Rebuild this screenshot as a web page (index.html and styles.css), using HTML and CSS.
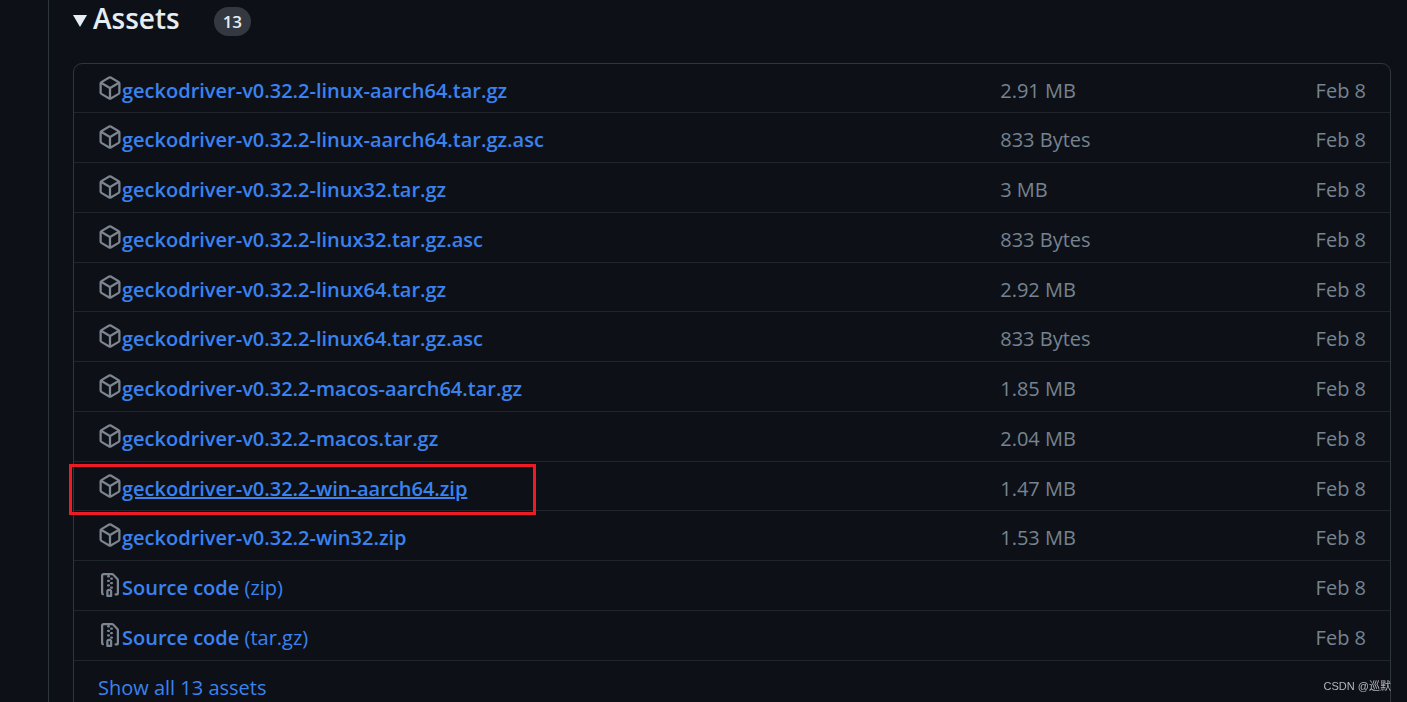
FILE: index.html
```html
<!DOCTYPE html>
<html lang="en">
<head>
  <meta charset="UTF-8">
  <meta name="viewport" content="width=device-width, initial-scale=1.0">
  <title>Release assets</title>
  <link rel="stylesheet" href="styles.css">
</head>
<body>
  <svg class="sprite" aria-hidden="true">
    <symbol id="package" viewBox="0 0 16 16">
      <path d="m8.878.392 5.25 3.045c.54.314.872.89.872 1.514v6.098a1.75 1.75 0 0 1-.872 1.514l-5.25 3.045a1.75 1.75 0 0 1-1.756 0l-5.25-3.045A1.75 1.75 0 0 1 1 11.049V4.951c0-.624.332-1.201.872-1.514L7.122.392a1.75 1.75 0 0 1 1.756 0ZM7.875 1.69l-4.63 2.685L8 7.133l4.755-2.758-4.63-2.685a.248.248 0 0 0-.25 0ZM2.5 5.677v5.372c0 .09.047.171.125.216l4.625 2.683V8.432Zm6.25 8.271 4.625-2.683a.25.25 0 0 0 .125-.216V5.677L8.75 8.432Z"/>
    </symbol>
    <symbol id="file-zip" viewBox="0 0 16 16">
      <path d="M3.5 1.75v11.5c0 .09.048.173.126.217a.75.75 0 0 1-.752 1.298A1.748 1.748 0 0 1 2 13.25V1.75C2 .784 2.784 0 3.75 0h5.586c.464 0 .909.185 1.237.513l2.914 2.914c.329.328.513.773.513 1.237v8.586A1.75 1.75 0 0 1 12.25 15h-.5a.75.75 0 0 1 0-1.5h.5a.25.25 0 0 0 .25-.25V4.664a.25.25 0 0 0-.073-.177L9.513 1.573a.25.25 0 0 0-.177-.073H7.25a.75.75 0 0 1 0 1.5h-.5a.75.75 0 0 1 0-1.5h-3a.25.25 0 0 0-.25.25Zm3.75 8.75h.5c.966 0 1.75.784 1.75 1.75v3a.75.75 0 0 1-.75.75h-2.5a.75.75 0 0 1-.75-.75v-3c0-.966.784-1.75 1.75-1.75ZM6 5.25a.75.75 0 0 1 .75-.75h.5a.75.75 0 0 1 0 1.5h-.5A.75.75 0 0 1 6 5.25Zm.75 2.25h.5a.75.75 0 0 1 0 1.5h-.5a.75.75 0 0 1 0-1.5ZM8 6.75A.75.75 0 0 1 8.75 6h.5a.75.75 0 0 1 0 1.5h-.5A.75.75 0 0 1 8 6.75ZM8.75 3h.5a.75.75 0 0 1 0 1.5h-.5a.75.75 0 0 1 0-1.5ZM8 9.75A.75.75 0 0 1 8.75 9h.5a.75.75 0 0 1 0 1.5h-.5A.75.75 0 0 1 8 9.75Zm-1 2.5v2.25h1v-2.25a.25.25 0 0 0-.25-.25h-.5a.25.25 0 0 0-.25.25Z"/>
    </symbol>
  </svg>

  <main class="release">
    <details open>
      <summary class="assets-header">
        <span class="caret"></span>
        <h3>Assets</h3>
        <span class="counter">13</span>
      </summary>

      <div class="box">
        <table class="assets">
          <tbody>
            <tr>
              <td class="name"><div class="file"><svg class="icon"><use href="#package"/></svg><a href="#">geckodriver-v0.32.2-linux-aarch64.tar.gz</a></div></td>
              <td class="size">2.91 MB</td>
              <td class="date">Feb 8</td>
            </tr>
            <tr>
              <td class="name"><div class="file"><svg class="icon"><use href="#package"/></svg><a href="#">geckodriver-v0.32.2-linux-aarch64.tar.gz.asc</a></div></td>
              <td class="size">833 Bytes</td>
              <td class="date">Feb 8</td>
            </tr>
            <tr>
              <td class="name"><div class="file"><svg class="icon"><use href="#package"/></svg><a href="#">geckodriver-v0.32.2-linux32.tar.gz</a></div></td>
              <td class="size">3 MB</td>
              <td class="date">Feb 8</td>
            </tr>
            <tr>
              <td class="name"><div class="file"><svg class="icon"><use href="#package"/></svg><a href="#">geckodriver-v0.32.2-linux32.tar.gz.asc</a></div></td>
              <td class="size">833 Bytes</td>
              <td class="date">Feb 8</td>
            </tr>
            <tr>
              <td class="name"><div class="file"><svg class="icon"><use href="#package"/></svg><a href="#">geckodriver-v0.32.2-linux64.tar.gz</a></div></td>
              <td class="size">2.92 MB</td>
              <td class="date">Feb 8</td>
            </tr>
            <tr>
              <td class="name"><div class="file"><svg class="icon"><use href="#package"/></svg><a href="#">geckodriver-v0.32.2-linux64.tar.gz.asc</a></div></td>
              <td class="size">833 Bytes</td>
              <td class="date">Feb 8</td>
            </tr>
            <tr>
              <td class="name"><div class="file"><svg class="icon"><use href="#package"/></svg><a href="#">geckodriver-v0.32.2-macos-aarch64.tar.gz</a></div></td>
              <td class="size">1.85 MB</td>
              <td class="date">Feb 8</td>
            </tr>
            <tr>
              <td class="name"><div class="file"><svg class="icon"><use href="#package"/></svg><a href="#">geckodriver-v0.32.2-macos.tar.gz</a></div></td>
              <td class="size">2.04 MB</td>
              <td class="date">Feb 8</td>
            </tr>
            <tr class="marked">
              <td class="name"><div class="file"><svg class="icon"><use href="#package"/></svg><a href="#">geckodriver-v0.32.2-win-aarch64.zip</a></div></td>
              <td class="size">1.47 MB</td>
              <td class="date">Feb 8</td>
            </tr>
            <tr>
              <td class="name"><div class="file"><svg class="icon"><use href="#package"/></svg><a href="#">geckodriver-v0.32.2-win32.zip</a></div></td>
              <td class="size">1.53 MB</td>
              <td class="date">Feb 8</td>
            </tr>
            <tr>
              <td class="name"><div class="file"><svg class="icon"><use href="#file-zip"/></svg><a href="#">Source code <span>(zip)</span></a></div></td>
              <td class="size"></td>
              <td class="date">Feb 8</td>
            </tr>
            <tr>
              <td class="name"><div class="file"><svg class="icon"><use href="#file-zip"/></svg><a href="#">Source code <span>(tar.gz)</span></a></div></td>
              <td class="size"></td>
              <td class="date">Feb 8</td>
            </tr>
          </tbody>
        </table>
        <button type="button" class="show-all">Show all 13 assets</button>
      </div>
    </details>
  </main>

  <div class="watermark">CSDN @巡默</div>
</body>
</html>
```
FILE: styles.css
```css
*,
*::after {
  box-sizing: border-box;
}

body {
  margin: 0;
  height: 100vh;
  overflow: hidden;
  background: #0d1117;
  color: #e6edf3;
  font-family: "Open Sans", "Noto Sans", sans-serif;
  font-size: 20px;
  line-height: 28px;
}

.sprite {
  display: none;
}

.release {
  min-height: 100vh;
  margin-left: 48px;
  padding: 0 16px 0 24px;
  border-left: 1px solid #30363d;
}

.assets-header {
  display: flex;
  align-items: flex-end;
  height: 63px;
  padding-bottom: 27px;
  list-style: none;
  cursor: pointer;
}

.assets-header::-webkit-details-marker {
  display: none;
}

.caret {
  margin: 0 6px 9px 0;
  border: 7px solid transparent;
  border-top: 12px solid #e6edf3;
  border-bottom: 0;
}

.assets-header h3 {
  margin: 0;
  font-size: 28px;
  font-weight: 600;
  line-height: 36px;
}

.counter {
  margin-left: 34px;
  padding: 0 9px;
  border-radius: 15px;
  background: #343941;
  font-size: 17px;
  font-weight: 600;
  line-height: 29px;
}

.box {
  border: 1px solid #30363d;
  border-radius: 9px;
}

.assets {
  width: 100%;
  border-spacing: 0;
  table-layout: fixed;
}

.assets td {
  height: 50px;
  padding: 13px 0 0 5px;
  border-bottom: 1px solid #21262d;
  vertical-align: top;
}

.assets tr:nth-child(4n+1) td {
  height: 49px;
}

.assets .name {
  padding: 7px 0 0 24px;
}

.file {
  display: flex;
  align-items: center;
}

.icon {
  flex: none;
  width: 24px;
  height: 24px;
  fill: #7d8590;
}

.file a {
  padding-top: 6px;
  color: #3a82f0;
  font-weight: 600;
  text-decoration: none;
}

.file span {
  font-weight: 400;
}

.size,
.date {
  width: 15%;
  color: #768390;
}

.assets .date {
  padding-right: 24px;
  text-align: right;
}

.marked .name {
  position: relative;
}

.marked a {
  text-decoration: underline;
  text-decoration-thickness: 2px;
}

/* red frame around the file to download */
.marked .name::after {
  content: '';
  position: absolute;
  top: 2px;
  left: -5px;
  width: 467px;
  height: 51px;
  border: 3px solid #ed1c24;
}

.show-all {
  padding: 13px 24px 9px;
  border: 0;
  background: none;
  color: #3a82f0;
  font: inherit;
  cursor: pointer;
}

.watermark {
  position: fixed;
  right: 16px;
  bottom: 8px;
  color: #b4b6b9;
  font-family: "Liberation Sans", "Noto Sans CJK SC", sans-serif;
  font-size: 11px;
  line-height: 16px;
}
```
